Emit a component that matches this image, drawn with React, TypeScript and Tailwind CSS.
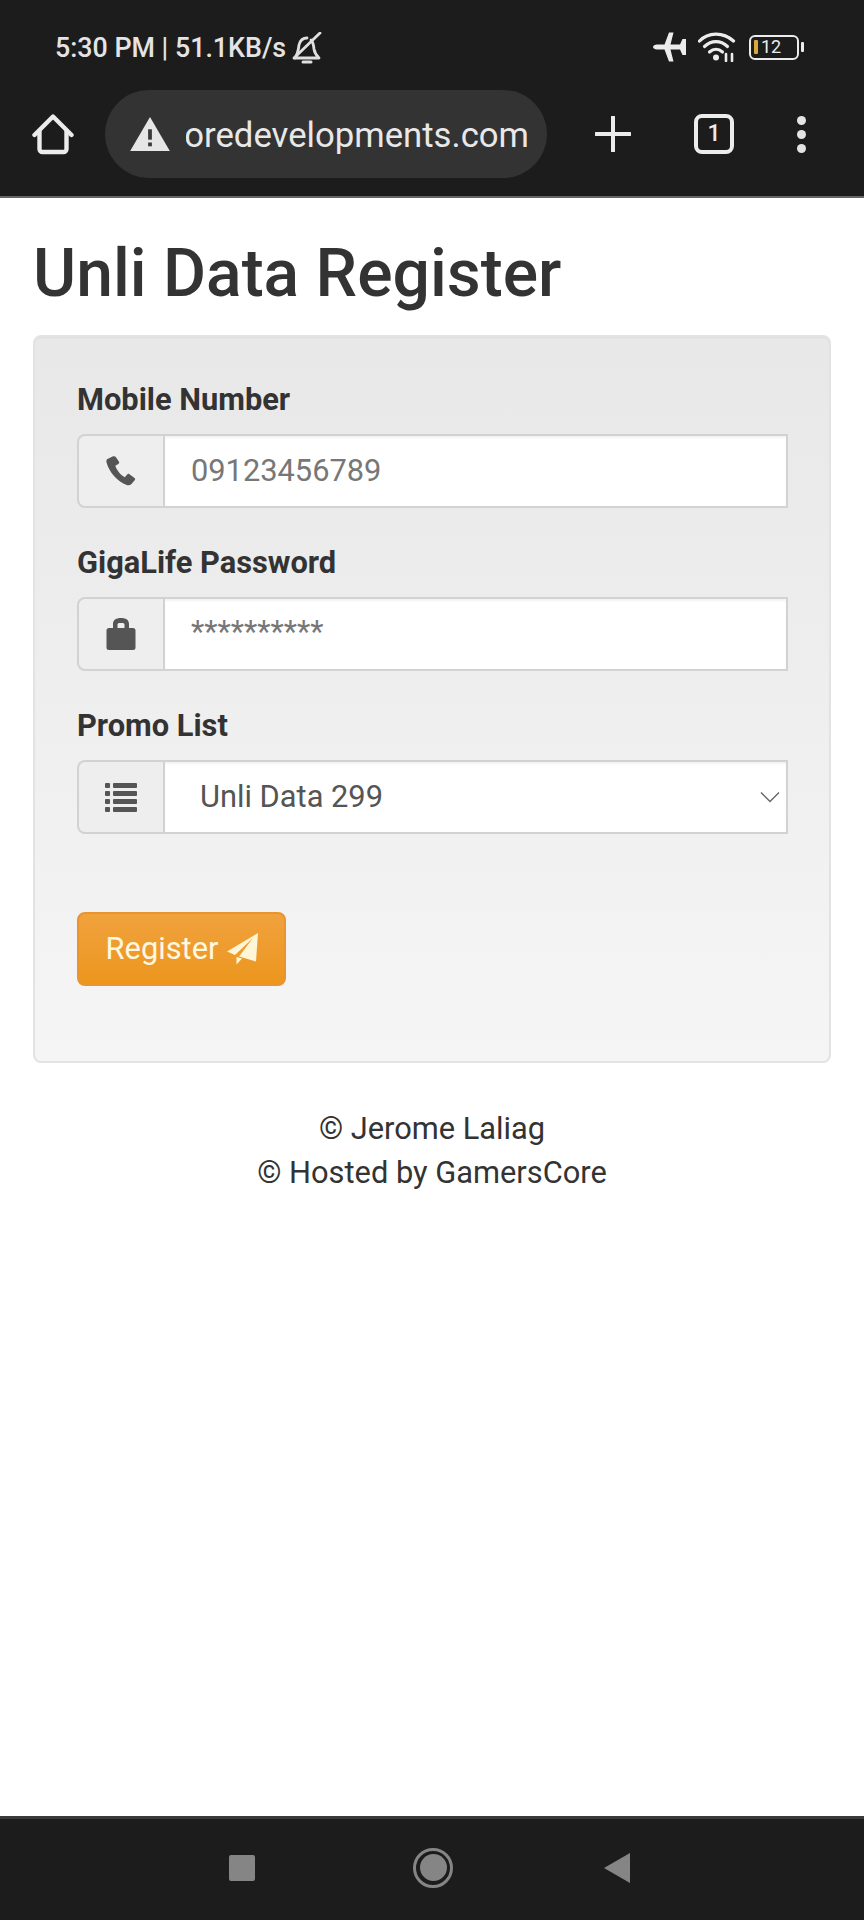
import React from "react";

function Home() {
  return (
    <svg width="42" height="42" viewBox="0 0 42 42" fill="none" stroke="#ececec" strokeWidth="4.4" strokeLinejoin="round" strokeLinecap="round">
      <path d="M2.5 22 21 3.5 39.5 22" />
      <path d="M7.5 18v18a3 3 0 0 0 3 3h21a3 3 0 0 0 3-3V18" />
    </svg>
  );
}

function BellOff() {
  return (
    <svg width="30" height="32" viewBox="0 0 30 32" fill="none" stroke="#e0e0e0" strokeWidth="2.800" strokeLinejoin="round" strokeLinecap="round">
      <path d="M3 26h24c-3-3-4.500-5-5-9-.5-5-1-7-3-9" />
      <path d="M15 6c-4 0-7 3-8 7-.5 5-1.500 9-4 13" />
      <path d="M2 26 28 1" />
      <path d="M11 30h8" strokeWidth="3" />
    </svg>
  );
}

function Plane() {
  return (
    <svg width="34" height="30" viewBox="0 0 34 30" fill="#ececec">
      <path d="M0 15c0-1.500 2-2.500 4-2.500h7.500L16 .5h4.500L17.500 12.500H27L29.500 7H33v16h-3.500L27 17.500h-9.500l3 12H16l-4.500-12H4c-2 0-4-1-4-2.500z" />
    </svg>
  );
}

function Wifi() {
  return (
    <svg width="38" height="30" viewBox="0 0 38 30" fill="none" stroke="#ececec" strokeWidth="3.200" strokeLinecap="round">
      <path d="M1.500 9C10-0 25-.5 35.500 9" />
      <path d="M6.500 14.500c7-6.500 16-6.500 23 0" />
      <path d="M11.500 20c4-3.500 9-3.500 13 0" />
      <circle cx="18" cy="25.500" r="3" fill="#ececec" stroke="none" />
      <path d="M28 22v7M34 22v7" strokeWidth="2.600" />
    </svg>
  );
}

function Battery() {
  return (
    <div className="flex items-center gap-[2px]">
      <div className="flex h-[25px] w-[50px] items-center rounded-[6px] border-[2.500px] border-[#ececec] pl-[3px]">
        <div className="h-[14px] w-[4px] rounded-[1px] bg-[#d9a73c]" />
        <span className="ml-[3px] text-[18px] leading-none text-[#ececec]">12</span>
      </div>
      <div className="h-[10px] w-[3px] rounded-[1px] bg-[#ececec]" />
    </div>
  );
}

function Warning() {
  return (
    <svg width="40" height="34" viewBox="0 0 42 36">
      <path d="M21 0 42 36H0z" fill="#e6e6e6" />
      <rect x="19" y="13" width="4" height="11" fill="#3a3a3a" />
      <rect x="19" y="27" width="4" height="4" fill="#3a3a3a" />
    </svg>
  );
}

function PhoneIcon() {
  return (
    <svg width="30" height="30" viewBox="0 0 30 30" fill="#555">
      <path d="M6.500.5 1.500 3C.5 3.500 0 5 .7 7c2.500 9 11 19 20 22 2 .7 3.500.2 4.500-.8l3.500-4c.7-.8.6-1.700-.2-2.300l-5-3.700c-.8-.6-1.700-.5-2.300.2l-2.400 2.800c-4-2-8-7-9.500-11.500l3-1.800c.9-.5 1.100-1.400.7-2.200L10 1.300C9.300.2 7.800-.1 6.500.5z" />
    </svg>
  );
}

function LockIcon() {
  return (
    <svg width="30" height="32" viewBox="0 0 30 32" fill="#555">
      <path fillRule="evenodd" d="M7 10V6c0-4 3-6 8-6s8 2 8 6v4h4a2.500 2.500 0 0 1 2.500 2.500v17A2.500 2.500 0 0 1 27 32H3A2.500 2.500 0 0 1 .5 29.500v-17A2.500 2.500 0 0 1 3 10zm4.500 0h7V6.500C18.500 5.300 17.500 5 15 5s-3.500.3-3.500 1.500z" />
    </svg>
  );
}

function ListIcon() {
  return (
    <svg width="32" height="30" viewBox="0 0 32 30" fill="#555">
      <rect x="0" y="1" width="5" height="5" rx="1" />
      <rect x="0" y="9" width="5" height="5" rx="1" />
      <rect x="0" y="17" width="5" height="5" rx="1" />
      <rect x="0" y="25" width="5" height="5" rx="1" />
      <rect x="8" y="1" width="24" height="5" rx="1" />
      <rect x="8" y="9" width="24" height="5" rx="1" />
      <rect x="8" y="17" width="24" height="5" rx="1" />
      <rect x="8" y="25" width="24" height="5" rx="1" />
    </svg>
  );
}

function SendIcon() {
  return (
    <svg width="32" height="32" viewBox="0 0 32 32" fill="#fff6d8">
      <path d="M31 0 0 18.500l8 3.500L26 5 12 23.500l17 5z" />
      <path d="M9.500 24v7.500l5.500-6z" />
    </svg>
  );
}

function Field({
  label,
  icon,
  children,
}: {
  label: string;
  icon: React.ReactNode;
  children: React.ReactNode;
}) {
  return (
    <div className="mb-[33px]">
      <div className="mb-[13px] text-[30.800px] font-bold leading-[43px] text-[#333]">{label}</div>
      <div className="flex h-[74px]">
        <div className="flex w-[88px] shrink-0 items-center justify-center rounded-l-[8px] border-[2px] border-[#d2d2d2] bg-[#eee]">
          {icon}
        </div>
        <div className="ml-[-2px] flex min-w-0 flex-1 items-center border-[2px] border-[#d2d2d2] bg-white shadow-[inset_0_2px_2px_rgba(0,0,0,0.05)]">
          {children}
        </div>
      </div>
    </div>
  );
}

export default function App() {
  return (
    <div className="flex h-[1920px] w-[864px] flex-col bg-white font-['Roboto',sans-serif]">
      <header className="h-[198px] shrink-0 border-b-[2px] border-[#666] bg-[#1c1c1c]">
        <div className="flex h-[90px] items-start pl-[55px] pr-[60px] pt-[30px]">
          <div className="text-[26.800px] font-medium leading-[36px] text-[#e4e4e4]">5:30 PM | 51.1KB/s</div>
          <div className="ml-[6px] mt-[2px]">
            <BellOff />
          </div>
          <div className="ml-auto flex items-center gap-[11px] pt-[2px]">
            <Plane />
            <Wifi />
            <div className="ml-[2px]">
              <Battery />
            </div>
          </div>
        </div>
        <div className="flex items-center">
          <div className="flex w-[105px] justify-center">
            <Home />
          </div>
          <div className="flex h-[88px] w-[442px] items-center rounded-full bg-[#333] pl-[25px] pr-[18px]">
            <Warning />
            <div className="ml-[16px] flex h-full min-w-0 flex-1 items-center justify-end overflow-hidden pt-[2px]">
              <span className="whitespace-nowrap text-[34.700px] text-[#e8e8e8]">gamerscoredevelopments.com</span>
            </div>
          </div>
          <div className="flex flex-1 items-center pl-[48px]">
            <svg width="36" height="36" viewBox="0 0 36 36" stroke="#ececec" strokeWidth="4" strokeLinecap="round">
              <path d="M18 1v34M1 18h34" />
            </svg>
            <div className="ml-[63px] flex h-[40px] w-[40px] items-center justify-center rounded-[8px] border-[4px] border-[#ececec] text-[23px] font-medium text-[#ececec]">
              1
            </div>
            <div className="ml-[63px] flex flex-col gap-[5px]">
              <div className="h-[9px] w-[9px] rounded-full bg-[#e4e4e4]" />
              <div className="h-[9px] w-[9px] rounded-full bg-[#e4e4e4]" />
              <div className="h-[9px] w-[9px] rounded-full bg-[#e4e4e4]" />
            </div>
          </div>
        </div>
      </header>

      <main className="flex-1 px-[33px]">
        <h1 className="mt-[38px] text-[66px] font-medium leading-[76px] text-[#333]">Unli Data Register</h1>
        <div className="mt-[23px] h-[728px] rounded-[8px] border-[2px] border-[#e3e3e3] bg-gradient-to-b from-[#e8e8e8] to-[#f5f5f5] pl-[42px] pr-[41px] pt-[41px] shadow-[inset_0_1px_1px_rgba(0,0,0,0.05)]">
          <Field label="Mobile Number" icon={<PhoneIcon />}>
            <span className="pl-[26px] text-[30.800px] text-[#777]">09123456789</span>
          </Field>
          <Field label="GigaLife Password" icon={<LockIcon />}>
            <span className="pl-[26px] pb-[4px] text-[30.800px] text-[#777]">**********</span>
          </Field>
          <Field label="Promo List" icon={<ListIcon />}>
            <span className="pl-[35px] text-[30.800px] text-[#555]">Unli Data 299</span>
            <svg className="ml-auto mr-[6px]" width="20" height="12" viewBox="0 0 20 12" fill="none" stroke="#666" strokeWidth="1.400">
              <path d="M1 1.500 10 10.500 19 1.500" />
            </svg>
          </Field>
          <div className="mt-[78px] flex h-[74px] w-[209px] items-center justify-center gap-[9px] rounded-[8px] border-[2px] border-[#e9942c] bg-gradient-to-b from-[#f0a23c] to-[#ec961c] pl-[2px] text-[30.800px] text-[#fff8e0]">
            Register
            <SendIcon />
          </div>
        </div>
        <div className="mt-[44px] text-center text-[30.800px] leading-[44px] text-[#333]">
          <div>© Jerome Laliag</div>
          <div>© Hosted by GamersCore</div>
        </div>
      </main>

      <footer className="flex h-[104px] shrink-0 items-center border-t-[3px] border-[#3a3a3a] bg-[#1c1c1c] pb-[4px]">
        <div className="ml-[229px] h-[26px] w-[26px] rounded-[2px] bg-[#858585]" />
        <div className="ml-[158px] flex h-[40px] w-[40px] items-center justify-center rounded-full border-[3px] border-[#858585]">
          <div className="h-[27px] w-[27px] rounded-full bg-[#858585]" />
        </div>
        <svg className="ml-[151px]" width="26" height="30" viewBox="0 0 26 30" fill="#858585">
          <path d="M26 0v30L0 15z" />
        </svg>
      </footer>
    </div>
  );
}
